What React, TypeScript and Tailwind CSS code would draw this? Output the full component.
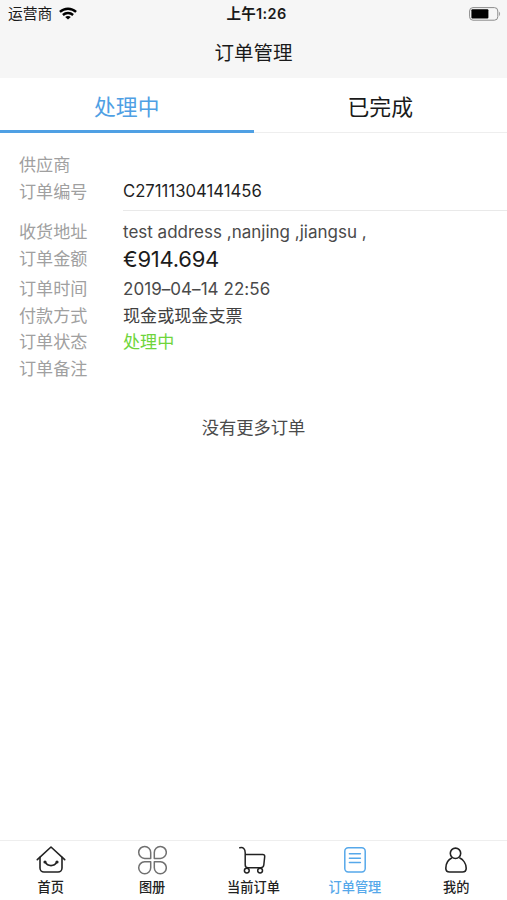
import type { ReactNode } from "react";

interface OrderField {
  label: string;
  value?: string;
  rowClass: string;
  valueClass?: string;
}

interface NavItem {
  label: string;
  icon: ReactNode;
  active?: boolean;
}

const orderFields: OrderField[] = [
  {
    label: "收货地址",
    value: "test address ,nanjing ,jiangsu ,",
    rowClass: "h-[27px]",
    valueClass: "text-[#4a4a4a] text-[17px] pt-px",
  },
  {
    label: "订单金额",
    value: "€914.694",
    rowClass: "h-[28px]",
    valueClass: "text-[#1c1c1c] text-[22px] tracking-[-0.25px]",
  },
  {
    label: "订单时间",
    value: "2019–04–14 22:56",
    rowClass: "h-[31px]",
    valueClass: "text-[#4a4a4a] text-[17px] tracking-[0.05px] pt-px",
  },
  {
    label: "付款方式",
    value: "现金或现金支票",
    rowClass: "h-[23px]",
    valueClass: "text-[#404040] text-[17.1px]",
  },
  {
    label: "订单状态",
    value: "处理中",
    rowClass: "h-[29px]",
    valueClass: "text-[#6fd53b] text-[17.1px]",
  },
  { label: "订单备注", rowClass: "h-[25px]" },
];

function HomeIcon() {
  return (
    <svg width="30" height="28" viewBox="0 0 30 28" fill="none" stroke="currentColor" strokeWidth="1.6" strokeLinecap="round" strokeLinejoin="round">
      <path d="M1.3 13.6 15 1l13.7 12.6" />
      <path d="M4 11.2V22a4 4 0 0 0 4 4h14a4 4 0 0 0 4-4V11.2" />
      <path d="M9.2 16.2c2.6 4.6 9 4.6 11.6 0" />
      <circle cx="9" cy="16" r="0.8" fill="currentColor" />
      <circle cx="21" cy="16" r="0.8" fill="currentColor" />
    </svg>
  );
}

function GalleryIcon() {
  return (
    <svg width="30" height="30" viewBox="0 0 30 30" fill="none" stroke="#707070" strokeWidth="1.5" strokeLinejoin="round">
      <path d="M13.7 13.4H7.6a6 6 0 1 1 6.1-6z" />
      <path d="M17.3 13.4h6.1a6 6 0 1 0-6.1-6z" />
      <path d="M13.7 16.8H7.6a6 6 0 1 0 6.1 6z" />
      <path d="M17.3 16.8h6.1a6 6 0 1 1-6.1 6z" />
    </svg>
  );
}

function CartIcon() {
  return (
    <svg width="28" height="28" viewBox="0 0 28 28" fill="none" stroke="currentColor" strokeWidth="1.5" strokeLinecap="round" strokeLinejoin="round">
      <path d="M.8 1.8c3.4-1 5.4 1.2 5.4 5v11.9c0 2 1 3 2.7 3h12.7c2 0 3-.9 3.2-2.7l.9-8.3c.1-1.6-.6-2.3-2-2.3H6.2" />
      <circle cx="7.8" cy="24.6" r="2.4" />
      <circle cx="21.1" cy="24.6" r="2.4" />
    </svg>
  );
}

function OrdersIcon() {
  return (
    <svg width="22" height="26" viewBox="0 0 22 26" fill="none" stroke="currentColor" strokeWidth="1.5" strokeLinecap="round">
      <rect x="0.8" y="0.8" width="20.4" height="24.2" rx="3.4" />
      <path d="M5.4 6.8h11M5.4 11.2h11M5.4 15.5h11" />
    </svg>
  );
}

function ProfileIcon() {
  return (
    <svg width="22" height="26" viewBox="0 0 22 26" fill="none" stroke="currentColor" strokeWidth="1.6" strokeLinejoin="round">
      <circle cx="10.5" cy="6.3" r="5.2" />
      <path d="M7 10.8C3.4 12.6.8 16.9.8 21.2c0 2.6 1.4 3.8 3.8 3.8h12.8c2.4 0 3.8-1.2 3.8-3.8 0-4.3-2.8-8.6-6.8-10.4" />
    </svg>
  );
}

function WifiIcon() {
  return (
    <svg width="18" height="13" viewBox="0 0 18 13" fill="none" stroke="#000" strokeWidth="2.4">
      <path d="M.9 4.9c4.6-4.3 11.6-4.3 16.2 0" />
      <path d="M3.9 8c2.9-2.6 7.3-2.6 10.2 0" />
      <path d="M9 12.5 6.2 9.9c1.5-1.3 4.1-1.3 5.6 0z" fill="#000" stroke="none" />
    </svg>
  );
}

function BatteryIcon() {
  return (
    <svg width="32" height="14" viewBox="0 0 32 14" fill="none">
      <rect x="0.6" y="0.6" width="28.2" height="12.6" rx="3.4" stroke="#8c8c8c" />
      <rect x="2.4" y="2.2" width="17" height="9.3" rx="1" fill="#000" />
      <path d="M30.2 4.8c1.2.5 1.2 3.7 0 4.2z" fill="#8c8c8c" />
    </svg>
  );
}

const navItems: NavItem[] = [
  { label: "首页", icon: <HomeIcon /> },
  { label: "图册", icon: <GalleryIcon /> },
  { label: "当前订单", icon: <CartIcon /> },
  { label: "订单管理", icon: <OrdersIcon />, active: true },
  { label: "我的", icon: <ProfileIcon /> },
];

function StatusBar() {
  return (
    <div className="grid grid-cols-3 items-center h-[27px] pl-2 pr-[6px] text-[#1a1a1a]">
      <div className="flex items-center gap-[7px]">
        <span className="pt-[2px] text-[14.8px] leading-none">运营商</span>
        <WifiIcon />
      </div>
      <span className="pt-[2px] pl-[4px] text-center text-[14.5px] leading-none tracking-[0.35px] font-semibold whitespace-nowrap">
        上午1:26
      </span>
      <div className="flex justify-end">
        <BatteryIcon />
      </div>
    </div>
  );
}

function FieldRow({ label, value, rowClass, valueClass }: OrderField) {
  return (
    <div className={`flex items-center ${rowClass}`}>
      <span className="w-[104px] shrink-0 text-[17.1px] text-[#a0a0a0]">{label}</span>
      {value && <span className={`whitespace-nowrap ${valueClass}`}>{value}</span>}
    </div>
  );
}

export default function App() {
  return (
    <div className="flex flex-col w-full h-[900px] overflow-hidden bg-white leading-none font-['Inter','Noto_Sans_CJK_SC',sans-serif]">
      {/* Header */}
      <header className="h-[78px] bg-[#f6f6f6] shrink-0">
        <StatusBar />
        <h1 className="flex items-center justify-center h-[51px] pt-[2px] text-[19.5px] text-[#1a1a1a]">
          订单管理
        </h1>
      </header>

      {/* Tabs */}
      <div className="grid grid-cols-2 h-[55px] shrink-0 text-[21.8px]">
        <button className="flex items-center justify-center pt-[7px] text-[#4fa0e4] border-b-[3px] border-[#4fa0e4]">
          处理中
        </button>
        <button className="flex items-center justify-center pt-[5px] text-[#1a1a1a] border-b border-[#eeeeee]">
          已完成
        </button>
      </div>

      {/* Order */}
      <main className="flex-1 pl-[19px]">
        <div className="pt-[19px]">
          <FieldRow label="供应商" rowClass="h-[26px]" />
          <FieldRow
            label="订单编号"
            value="C27111304141456"
            rowClass="h-[27px]"
            valueClass="text-[#1f1f1f] text-[16.7px]"
          />
        </div>
        <div className="ml-[104px] mt-[5px] mb-[7px] h-px bg-[#e9e9e9]" />
        {orderFields.map((field) => (
          <FieldRow key={field.label} {...field} />
        ))}
        <p className="mt-[38px] -ml-[19px] text-center text-[17.3px] text-[#4a4a4a]">
          没有更多订单
        </p>
      </main>

      {/* Bottom navigation */}
      <nav className="grid grid-cols-5 h-[60px] shrink-0 border-t border-[#eeeeee]">
        {navItems.map((item) => (
          <div
            key={item.label}
            className={`flex flex-col items-center ${item.active ? "text-[#56a8ea]" : "text-[#222]"}`}
          >
            <div className="flex items-center justify-center h-[38px]">{item.icon}</div>
            <span className="text-[13.2px] font-medium pt-[2px]">{item.label}</span>
          </div>
        ))}
      </nav>
    </div>
  );
}
